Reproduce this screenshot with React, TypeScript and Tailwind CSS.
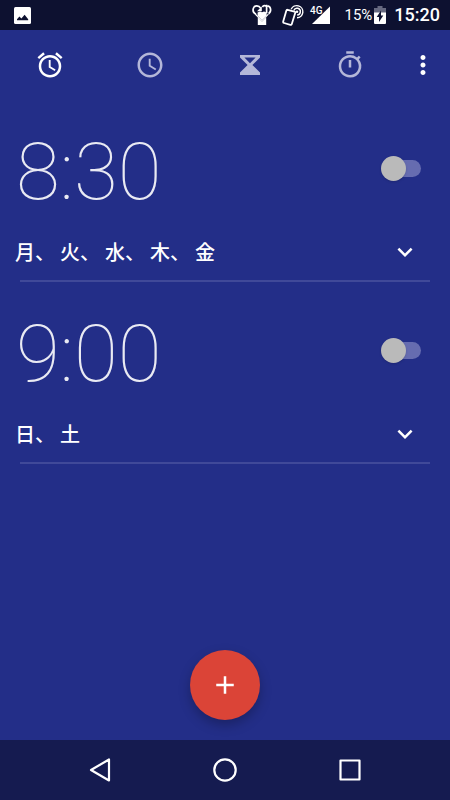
import type React from "react";
import { useState } from "react";
import {
	MdAccessAlarm,
	MdAccessTime,
	MdAdd,
	MdExpandMore,
	MdMoreVert,
	MdOutlineTimer,
} from "react-icons/md";

type Alarm = {
	id: string;
	time: string;
	days: string[];
};

const ALARMS: Alarm[] = [
	{ id: "weekday", time: "8:30", days: ["月", "火", "水", "木", "金"] },
	{ id: "weekend", time: "9:00", days: ["日", "土"] },
];

const HourglassIcon = () => (
	<svg width="30" height="30" viewBox="0 0 30 30" fill="currentColor">
		<path
			fillRule="evenodd"
			d="M5 5h20v2.6L17.4 15l7.6 7.4V25H5v-2.6l7.6-7.4L5 7.6zM9.4 7.6l5.6 5.6 5.6-5.6z"
		/>
	</svg>
);

const TABS = [
	{ id: "alarm", label: "アラーム", icon: <MdAccessAlarm size={30} /> },
	{ id: "clock", label: "時計", icon: <MdAccessTime size={30} /> },
	{ id: "timer", label: "タイマー", icon: <HourglassIcon /> },
	{
		id: "stopwatch",
		label: "ストップウォッチ",
		icon: <MdOutlineTimer size={30} />,
	},
];

const StatusBar = () => (
	<div className="flex h-[30px] items-center bg-[#0d1130] pr-[10px] pl-[14px] text-white">
		{/* Screenshot notification */}
		<svg width="17" height="17" viewBox="0 0 17 17">
			<rect width="17" height="17" rx="1.5" fill="white" />
			<path
				d="M3 13.2v-1l2.4-2.8 2 2 3.2-3.6 3.6 4.4v1z"
				fill="#0d1130"
			/>
		</svg>

		<div className="ml-auto flex items-center">
			{/* Hand with rotation arrows */}
			<svg
				width="20"
				height="22"
				viewBox="0 0 20 22"
				fill="none"
				stroke="white"
				strokeWidth="1.7"
			>
				<path d="M8.6 4.2C7 1.2 2.6 1 1.4 4.2.6 6.6 1.6 9 4 10.2" />
				<path d="M10.4 3.2c1-2 2.6-2 4.2-.8M15.6 1.8c3.4.6 4.2 5.6 1 8M14.6.8v8.4" />
				<path d="M9.8 2.6v4.6H5z" fill="white" stroke="none" />
				<path
					d="M5.6 8.6 8 7.4l2 .8 2-.8 2.6 1.2v3L10 16l-4.4-4.4z"
					fill="white"
					stroke="none"
				/>
				<path d="M3.4 10.2 10 16.6l6.4-6.4" strokeWidth="1.2" />
				<path
					d="M5.8 13.2 10 17.4l4.2-4.2V21H5.8z"
					fill="white"
					stroke="none"
				/>
			</svg>

			{/* Phone with NFC waves */}
			<svg
				className="ml-[10px]"
				width="22"
				height="22"
				viewBox="0 0 22 22"
				fill="none"
				stroke="white"
			>
				<path
					d="m5.6 5.8 6.8 1.9q1.1.3.8 1.4L9.8 20q-.3 1.1-1.4.8L2 19q-1.1-.3-.8-1.4L4.3 6.7q.3-1.1 1.3-.9z"
					strokeWidth="1.8"
				/>
				<path
					d="M9.2 5.2a6.1 6.1 0 1 1 5.8 8.6M11.8 6.4a3.4 3.4 0 1 1 3.4 4.6"
					strokeWidth="1.4"
				/>
				<circle cx="15" cy="7.8" r="1.3" fill="white" stroke="none" />
			</svg>

			<div className="ml-[6px] flex">
				<span className="-mr-[10px] h-[22px] font-medium text-[10px] leading-[14px]">
					4G
				</span>
				<svg width="18" height="22" viewBox="0 0 18 22">
					<path d="M18 2.5V20H0z" fill="white" />
				</svg>
			</div>

			<span className="ml-[14px] text-[15px] leading-5">15%</span>
			<svg
				className="ml-[2px]"
				width="12"
				height="18"
				viewBox="0 0 12 18"
			>
				<path d="M3.5 0h5v2H12v5H0V2h3.5z" fill="#666980" />
				<path d="M0 6.5h12V17q0 1-1 1H1q-1 0-1-1z" fill="white" />
				<path d="M7 4.5v5h2.3L5 16v-5H2.7z" fill="#0d1130" />
			</svg>
			<span className="ml-[8px] font-medium text-[18px] leading-5">15:20</span>
		</div>
	</div>
);

const AlarmCard: React.FC<{ alarm: Alarm }> = ({ alarm }) => {
	const [enabled, setEnabled] = useState(false);

	return (
		<li className="mx-5 border-[#404999] border-b-2 pt-8 pb-[13px]">
			<div className="-mx-1 flex h-20 items-center justify-between">
				<button
					type="button"
					className="font-thin text-[80px] text-white/90 leading-20"
				>
					{alarm.time}
				</button>
				<label className="relative mr-[13px] mb-2 flex h-[25px] w-10 cursor-pointer items-center">
					<input
						type="checkbox"
						role="switch"
						aria-label={`${alarm.time} のアラーム`}
						checked={enabled}
						onChange={(e) => setEnabled(e.target.checked)}
						className="peer sr-only"
					/>
					<span className="ml-1 h-[17px] w-9 rounded-full bg-[#666cb0]" />
					<span className="absolute left-0 size-[25px] rounded-full bg-[#bababa] shadow-sm peer-checked:left-[15px] peer-checked:bg-[#db4437]" />
				</label>
			</div>

			<div className="-ml-[5px] mt-[25px] flex h-[30px] items-center justify-between pr-[10px]">
				<p className="pt-0.5 font-medium text-[20px] text-white leading-[30px]">
					{alarm.days.join("、 ")}
				</p>
				<button type="button" aria-label="展開" className="text-white">
					<MdExpandMore size={30} />
				</button>
			</div>
		</li>
	);
};

const App: React.FC = () => {
	const [activeTab, setActiveTab] = useState("alarm");

	return (
		<div className="flex min-h-screen flex-col bg-[#232e88] font-['Roboto','Noto_Sans_CJK_JP',sans-serif]">
			<StatusBar />

			<header className="flex h-[70px] items-center">
				<nav className="grid flex-1 grid-cols-4">
					{TABS.map((tab) => (
						<button
							key={tab.id}
							type="button"
							aria-label={tab.label}
							onClick={() => setActiveTab(tab.id)}
							className={`flex h-[70px] items-center justify-center ${
								activeTab === tab.id ? "text-white" : "text-[#b4b7d9]"
							}`}
						>
							{tab.icon}
						</button>
					))}
				</nav>
				<button
					type="button"
					aria-label="その他"
					className="flex h-[70px] w-[50px] items-center justify-center pr-[5px] text-white"
				>
					<MdMoreVert size={30} />
				</button>
			</header>

			<main className="flex flex-1 flex-col">
				<ul>
					{ALARMS.map((alarm) => (
						<AlarmCard key={alarm.id} alarm={alarm} />
					))}
				</ul>

				<button
					type="button"
					aria-label="アラームを追加"
					className="mx-auto mt-auto mb-5 flex size-[70px] items-center justify-center rounded-full bg-[#db4437] text-white shadow-[0_5px_12px_rgba(0,0,0,0.25)]"
				>
					<MdAdd size={30} />
				</button>
			</main>

			{/* System navigation */}
			<nav className="grid h-[60px] grid-cols-3 bg-[#151b50] px-[37px] text-white">
				<button
					type="button"
					aria-label="戻る"
					className="flex items-center justify-center"
				>
					<svg
						width="26"
						height="26"
						viewBox="0 0 26 26"
						fill="none"
						stroke="currentColor"
						strokeWidth="2.2"
						strokeLinejoin="round"
					>
						<path d="M22 2.5v21L4 13z" />
					</svg>
				</button>
				<button
					type="button"
					aria-label="ホーム"
					className="flex items-center justify-center"
				>
					<svg
						width="26"
						height="26"
						viewBox="0 0 26 26"
						fill="none"
						stroke="currentColor"
						strokeWidth="2.2"
					>
						<circle cx="13" cy="13" r="10.7" />
					</svg>
				</button>
				<button
					type="button"
					aria-label="アプリ履歴"
					className="flex items-center justify-center"
				>
					<svg
						width="26"
						height="26"
						viewBox="0 0 26 26"
						fill="none"
						stroke="currentColor"
						strokeWidth="2.2"
						strokeLinejoin="round"
					>
						<path d="M3.5 3.5h19v19h-19z" />
					</svg>
				</button>
			</nav>
		</div>
	);
};

export default App;
